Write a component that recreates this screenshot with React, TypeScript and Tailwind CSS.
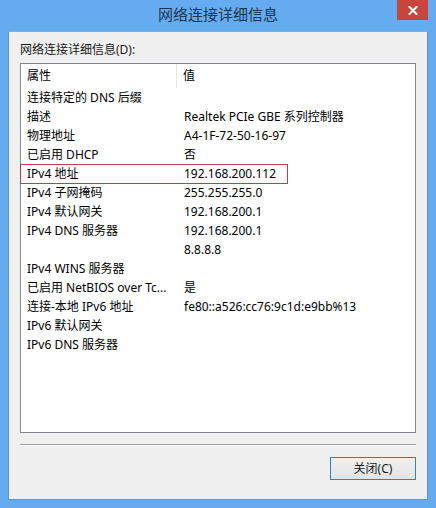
import React from "react";

const rows: [string, string][] = [
  ["连接特定的 DNS 后缀", ""],
  ["描述", "Realtek PCIe GBE 系列控制器"],
  ["物理地址", "A4-1F-72-50-16-97"],
  ["已启用 DHCP", "否"],
  ["IPv4 地址", "192.168.200.112"],
  ["IPv4 子网掩码", "255.255.255.0"],
  ["IPv4 默认网关", "192.168.200.1"],
  ["IPv4 DNS 服务器", "192.168.200.1"],
  ["", "8.8.8.8"],
  ["IPv4 WINS 服务器", ""],
  ["已启用 NetBIOS over Tc...", "是"],
  ["连接-本地 IPv6 地址", "fe80::a526:cc76:9c1d:e9bb%13"],
  ["IPv6 默认网关", ""],
  ["IPv6 DNS 服务器", ""],
];

const font = { fontFamily: '"Noto Sans", "Noto Sans CJK SC", sans-serif' };

export default function App() {
  return (
    <div
      className="w-[436px] h-[508px] bg-[#64acef] flex flex-col text-[12px] text-black"
      style={font}
    >
      <div className="relative h-[31px] flex items-center justify-center shrink-0">
        <span className="text-[15px] text-[#1d3550] leading-none -mt-[3px]">网络连接详细信息</span>
        <div className="absolute top-0 right-[8px] w-[31px] h-[20px] bg-[#c8453b] flex items-center justify-center">
          <svg width="10" height="9" viewBox="0 0 10 9">
            <path d="M1.5 1 L8.5 8 M8.5 1 L1.5 8" stroke="#ffffff" strokeWidth="2" strokeLinecap="square" />
          </svg>
        </div>
      </div>
      <div className="mx-[8px] mb-[8px] flex-1 bg-[#f0f0f0] border border-[#5b95cc] border-t-[#7ab0e0] pt-[10px] px-[11px] flex flex-col">
        <div className="h-[16px] leading-[16px] text-[#1a1a1a]">网络连接详细信息(D):</div>
        <div className="mt-[5px] h-[370px] bg-white border border-[#828790] flex flex-col">
          <div className="h-[24px] flex items-center shrink-0">
            <div className="w-[156px] h-full flex items-center pl-[6px] border-r border-[#e5e5e5]">属性</div>
            <div className="pl-[6px]">值</div>
          </div>
          {rows.map(([k, v], i) => (
            <div key={i} className="relative h-[19px] flex items-center shrink-0">
              <div className="w-[156px] pl-[6px] whitespace-nowrap overflow-hidden">{k}</div>
              <div className="pl-[7px] whitespace-nowrap">{v}</div>
              {i === 4 && (
                <div className="absolute -left-[1px] top-0 w-[268px] h-[20px] border border-[#d0354a]" />
              )}
            </div>
          ))}
        </div>
        <div className="mt-[11px] h-[2px] border-t border-[#a0a0a0] border-b border-b-white" />
        <div className="mt-[11px] flex justify-end pr-[0px]">
          <button
            className="w-[86px] h-[23px] border border-[#3c7fb1] bg-gradient-to-b from-[#f0f0f0] to-[#e3e3e3] text-[12px] text-[#1a1a1a] flex items-center justify-center"
            style={font}
          >
            关闭(C)
          </button>
        </div>
      </div>
    </div>
  );
}
